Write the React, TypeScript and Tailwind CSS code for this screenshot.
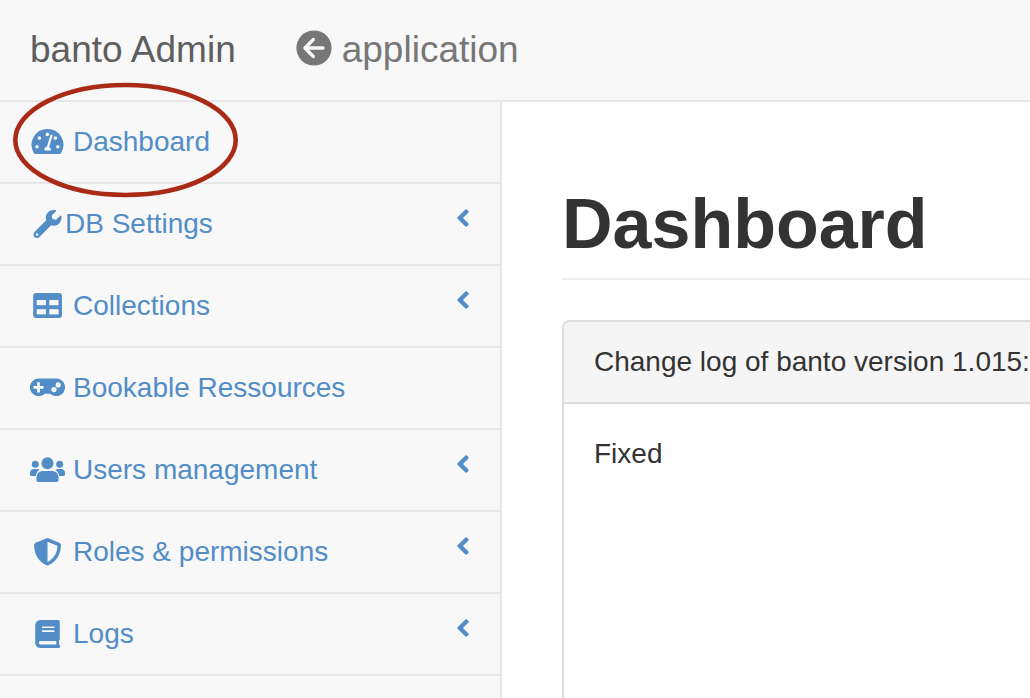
import type { ComponentType, ReactNode } from 'react';
import { FaAngleLeft, FaWrench } from 'react-icons/fa';

interface IconProps {
  className?: string;
}

interface MenuItem {
  label: string;
  icon: ComponentType<IconProps>;
  expandable?: boolean;
  tight?: boolean;
  marked?: boolean;
}

// colour of the holes inside the solid icons
const HOLE = '#f8f8f8';

function MenuIcon({ className, children }: IconProps & { children: ReactNode }) {
  return (
    <svg className={className} viewBox="0 0 35 28" fill="currentColor" aria-hidden="true">
      {children}
    </svg>
  );
}

function GaugeIcon({ className }: IconProps) {
  return (
    <MenuIcon className={className}>
      <path d="M17.5 1A15.8 15.8 0 0 0 3.9 25a1.8 1.8 0 0 0 1.6 1h24a1.8 1.8 0 0 0 1.6-1A15.8 15.8 0 0 0 17.5 1z" />
      <g fill={HOLE}>
        <circle cx="7" cy="18.7" r="1.8" />
        <circle cx="9.4" cy="10.1" r="1.8" />
        <circle cx="17.4" cy="6.4" r="1.8" />
        <circle cx="25.4" cy="10.1" r="1.8" />
        <circle cx="27.8" cy="18.7" r="1.8" />
        <path d="M14.5 22.6a3.6 3.6 0 0 1 2.5-4.2L20.4 7.3a1.1 1.1 0 0 1 2.1.7l-3.4 11a3.6 3.6 0 0 1 2 3.6z" />
      </g>
    </MenuIcon>
  );
}

function TableIcon({ className }: IconProps) {
  return (
    <MenuIcon className={className}>
      <rect x="3.2" y="1" width="28.8" height="25" rx="3" />
      <g fill={HOLE}>
        <rect x="6.7" y="8" width="9.2" height="5.2" />
        <rect x="19.3" y="8" width="9.2" height="5.2" />
        <rect x="6.7" y="17.2" width="9.2" height="5.2" />
        <rect x="19.3" y="17.2" width="9.2" height="5.2" />
      </g>
    </MenuIcon>
  );
}

function GamepadIcon({ className }: IconProps) {
  return (
    <MenuIcon className={className}>
      <path d="M8.8 4.5h17.4a8.8 8.8 0 1 1-6 15.2h-5.4a8.8 8.8 0 1 1-6-15.2z" />
      <g fill={HOLE}>
        <path d="M7.1 8.2h2.8v3.7h3.7v2.8H9.9v3.7H7.1v-3.7H3.4v-2.8h3.7z" />
        <circle cx="24" cy="15.6" r="2.6" />
        <circle cx="28.2" cy="10.9" r="2.6" />
      </g>
    </MenuIcon>
  );
}

function UsersIcon({ className }: IconProps) {
  return (
    <MenuIcon className={className}>
      <circle cx="17.5" cy="7.2" r="6" />
      <circle cx="5.3" cy="8.3" r="3.5" />
      <circle cx="29.7" cy="8.3" r="3.5" />
      <path d="M12.5 15h10a6 6 0 0 1 6 6v3.2a1.8 1.8 0 0 1-1.8 1.8H8.3a1.8 1.8 0 0 1-1.8-1.8V21a6 6 0 0 1 6-6z" />
      <path d="M4 13.1h3c1 0 1.9.4 2.6 1C7.5 15.3 6 17.4 5.8 20.1H1.6A1.6 1.6 0 0 1 0 18.5V17a4 4 0 0 1 4-3.9z" />
      <path d="M31 13.1h-3c-1 0-1.9.4-2.6 1 2.1 1.2 3.6 3.3 3.8 6h4.2a1.6 1.6 0 0 0 1.6-1.6V17a4 4 0 0 0-4-3.9z" />
    </MenuIcon>
  );
}

function ShieldIcon({ className }: IconProps) {
  return (
    <MenuIcon className={className}>
      <path d="M16.7.2a2.2 2.2 0 0 1 1.6 0l11 4.5c1 .4 1.6 1.3 1.6 2.3 0 9-4 16.4-12.5 20.3a2.2 2.2 0 0 1-1.8 0C8.1 23.4 4.1 16 4.1 7c0-1 .6-1.9 1.6-2.3z" />
      <path d="M17.5 3.7l9.9 4.1c0 7.2-3.5 13-9.9 16.2z" fill={HOLE} />
    </MenuIcon>
  );
}

function BookIcon({ className }: IconProps) {
  return (
    <MenuIcon className={className}>
      <path d="M10.4 0h17.9a1.5 1.5 0 0 1 1.5 1.5v17.6c0 .6-.3 1.1-.8 1.3v4.4a1.6 1.6 0 0 1-.8 3.1H10.4a5.2 5.2 0 0 1-5.2-5.2V5.2A5.2 5.2 0 0 1 10.4 0z" />
      <g fill={HOLE}>
        <rect x="12" y="6.5" width="12.6" height="1.6" rx=".6" />
        <rect x="12" y="10.3" width="12.6" height="1.6" rx=".6" />
        <path d="M10.5 20.9h15.8v3.5H10.5a1.75 1.75 0 0 1 0-3.5z" />
      </g>
    </MenuIcon>
  );
}

function BackIcon({ className }: IconProps) {
  return (
    <svg className={className} viewBox="0 0 36 36" fill="none" aria-hidden="true">
      <circle cx="18" cy="18" r="17.6" fill="currentColor" />
      <path
        d="M27 18H9.6M17.2 9.6L9 18l8.2 8.4"
        stroke={HOLE}
        strokeWidth="3.5"
        strokeLinecap="round"
        strokeLinejoin="round"
      />
    </svg>
  );
}

const menu: MenuItem[] = [
  { label: 'Dashboard', icon: GaugeIcon, marked: true },
  { label: 'DB Settings', icon: FaWrench, expandable: true, tight: true },
  { label: 'Collections', icon: TableIcon, expandable: true },
  { label: 'Bookable Ressources', icon: GamepadIcon },
  { label: 'Users management', icon: UsersIcon, expandable: true },
  { label: 'Roles & permissions', icon: ShieldIcon, expandable: true },
  { label: 'Logs', icon: BookIcon, expandable: true },
];

function Header() {
  return (
    <header className="flex items-center gap-[60px] border-b-2 border-[#e7e7e7] px-[30px] py-[30px] text-[37px] leading-10">
      <a href="#" className="text-[#5e5e5e]">
        banto Admin
      </a>
      <a href="#" className="flex items-start gap-2.5 text-[#777777]">
        <BackIcon className="size-9" />
        application
      </a>
    </header>
  );
}

function Sidebar() {
  return (
    <nav className="w-[502px] shrink-0 border-r-2 border-[#e7e7e7] bg-[#f8f8f8]">
      <ul>
        {menu.map(({ label, icon: Icon, expandable, tight, marked }) => (
          <li key={label} className="relative border-b-2 border-[#e7e7e7]">
            <a href="#" className="flex items-start px-[30px] py-5 text-[#528dc7]">
              <span className={tight ? 'flex items-center' : 'flex items-center gap-2'}>
                <Icon className="h-7 w-[35px]" />
                {label}
              </span>
              {expandable && <FaAngleLeft className="ml-auto size-7 w-[14px]" />}
            </a>
            {/* ring around the active entry */}
            {marked && (
              <svg
                className="pointer-events-none absolute -top-5 left-3 z-10"
                width="228"
                height="116"
                viewBox="0 0 228 116"
                fill="none"
              >
                <ellipse cx="113.5" cy="58" rx="110.2" ry="55" stroke="#a92b17" strokeWidth="4.6" />
              </svg>
            )}
          </li>
        ))}
      </ul>
    </nav>
  );
}

export default function App() {
  return (
    <div className="flex min-h-screen flex-col overflow-hidden bg-[#f8f8f8] font-['Liberation_Sans',Arial,sans-serif] text-[28px] leading-10 text-[#333333]">
      <Header />
      <div className="flex flex-1">
        <Sidebar />
        <main className="flex min-w-0 flex-1 flex-col bg-white pt-[82px] pl-[60px]">
          <h1 className="mb-10 border-b-2 border-[#eeeeee] pb-[14px] text-[70px] leading-[80px] font-bold">
            Dashboard
          </h1>
          <section className="flex-1 rounded-tl-lg border-t-2 border-l-2 border-[#dddddd]">
            <h2 className="overflow-hidden rounded-tl-md border-b-2 border-[#dddddd] bg-[#f5f5f5] py-5 pl-[30px] whitespace-nowrap">
              Change log of banto version 1.015:
            </h2>
            <p className="p-[30px]">Fixed</p>
          </section>
        </main>
      </div>
    </div>
  );
}
